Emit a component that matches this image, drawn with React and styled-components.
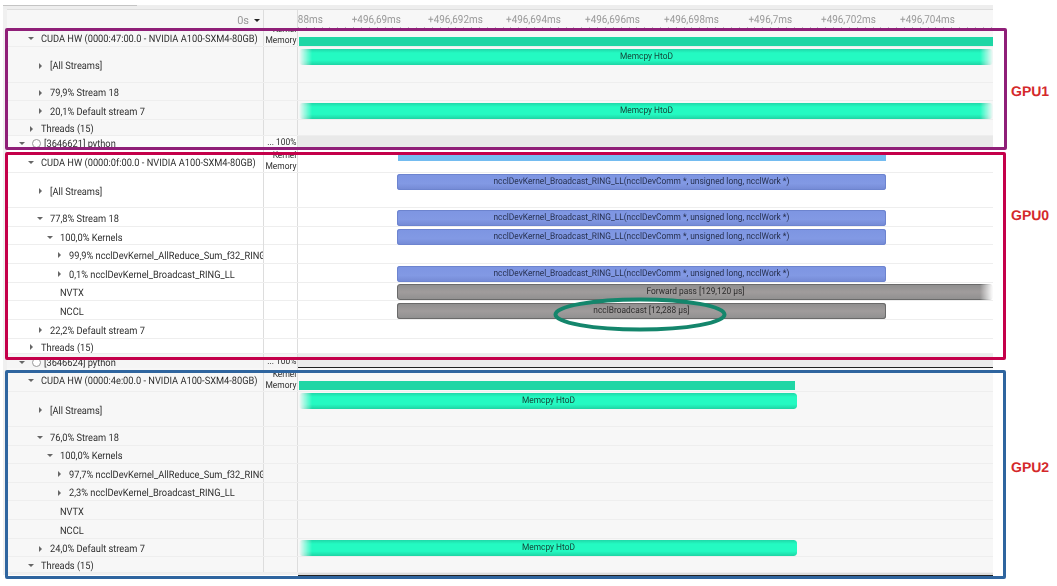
import React from 'react';
import styled, { createGlobalStyle, css } from 'styled-components';

const GlobalStyle = createGlobalStyle`
  html, body {
    margin: 0;
    padding: 0;
    background: #fff;
  }
  body {
    font-family: Roboto, "Liberation Sans", sans-serif;
    text-rendering: geometricPrecision;
  }
`;

// the capture is a bit narrower than it is tall, so the glyphs are too
const Squeezed = styled.span`
  display: inline-block;
  flex: none;
  transform: scaleX(0.9);
  transform-origin: ${p => p.$origin || 'center'};
`;

const Shell = styled.div`
  position: relative;
  width: 1057px;
  height: 586px;
  overflow: hidden;
  padding: 5px 0 0 3px;
  box-sizing: border-box;
`;

const Profiler = styled.div`
  width: 990px;
  height: 570px;
  background: #f0f0f0;
  padding-left: 4px;
  box-sizing: border-box;
  filter: blur(0.3px);
`;

const TopStrip = styled.div`
  height: 4px;
  margin-left: -4px;
  background: #eeeeee;
`;

const ScrollThumb = styled.div`
  width: 134px;
  height: 1px;
  background: #c4c4c4;
`;

const Columns = styled.div`
  display: grid;
  grid-template-columns: 257px 34px 1fr;
  height: ${p => p.$h}px;
  background: ${p => p.$bg || 'transparent'};
  border-bottom: ${p => (p.$last ? 'none' : '1px solid #eeeeee')};
  box-sizing: border-box;
`;

const HeaderRow = styled(Columns)`
  background: #f7f7f7;
  border-top: 1px solid #dddddd;
  border-bottom: none;
`;

const TableFoot = styled.div`
  height: 2px;
  margin-left: 291px;
  background: #dddddd;
  border-bottom: 1px solid #222222;
`;

const TotalCell = styled.div`
  border-right: 1px solid #dddddd;
  display: flex;
  align-items: center;
  justify-content: flex-end;
  gap: 5px;
  padding: 2px 3px 0 0;
  color: #999999;
  font-size: 11px;
`;

const SortArrow = styled.span`
  width: 0;
  height: 0;
  border-left: 3px solid transparent;
  border-right: 3px solid transparent;
  border-top: 3px solid #222222;
`;

const BlankHeader = styled.div`
  border-right: 1px solid #dddddd;
`;

const Ruler = styled.div`
  position: relative;
  display: flex;
  overflow: hidden;
  padding-top: 3px;
  margin-left: -39.5px;
  clip-path: inset(0 0 0 39.5px);
  color: #999999;
  font-size: 11px;
  &::after {
    content: '';
    position: absolute;
    left: 39.5px;
    right: 0;
    bottom: 0;
    height: 2px;
    background: repeating-linear-gradient(to right, #c0c0c0 0 1px, transparent 1px 7.87px);
  }
`;

const RulerLabel = styled.span`
  flex: 0 0 78.7px;
  display: flex;
  justify-content: center;
  white-space: nowrap;
  box-sizing: border-box;
  &:first-child {
    padding-right: 4px;
  }
`;

const NameCell = styled.div`
  display: flex;
  align-items: center;
  min-width: 0;
  overflow: hidden;
  white-space: nowrap;
  padding: 2px 0 0 ${p => p.$indent}px;
  border-right: 1px solid #dddddd;
  color: #2e2e2e;
  font-size: 10.3px;
`;

const CaretSlot = styled.span`
  flex: 0 0 8px;
  display: flex;
  justify-content: center;
  margin-right: 6px;
`;

const Caret = styled.span`
  width: 0;
  height: 0;
  ${p =>
    p.$open
      ? css`
          border-left: 3px solid transparent;
          border-right: 3px solid transparent;
          border-top: 3px solid #666666;
        `
      : css`
          border-top: 3px solid transparent;
          border-bottom: 3px solid transparent;
          border-left: 3px solid #666666;
        `}
`;

const ProcessDot = styled.span`
  flex: 0 0 9px;
  height: 9px;
  margin-right: 3px;
  border: 1px solid #999999;
  border-radius: 50%;
  background: #ffffff;
  box-sizing: border-box;
`;

const UsageCell = styled.div`
  display: flex;
  flex-direction: column;
  justify-content: ${p => (p.$stacked ? 'flex-end' : 'center')};
  align-items: flex-end;
  overflow: hidden;
  padding-right: 1px;
  border-right: 1px solid #dddddd;
  color: #2e2e2e;
  font-size: 9.4px;
  line-height: 11px;
  white-space: nowrap;
`;

const Track = styled.div`
  display: flex;
  align-items: flex-start;
  min-width: 0;
  background: ${p => p.$shade || 'transparent'};
  border-bottom: ${p => (p.$rule ? '1px solid #222222' : 'none')};
`;

const barSkins = {
  teal: css`
    background: linear-gradient(to bottom, #1fd8a8 0%, #24fac2 25%, #24fac2 70%, #1fd4a4 100%);
    color: #14463a;
    border-radius: 3px;
  `,
  solidTeal: css`
    background: #1fd6a5;
  `,
  sky: css`
    background: #74bcf0;
  `,
  kernel: css`
    background: linear-gradient(to bottom, #7d95e2 0%, #8299e4 60%, #7389d4 100%);
    box-shadow: inset 0 0 0 1px #6d84cf;
    color: #26304f;
    border-radius: 3px;
  `,
  marker: css`
    background: linear-gradient(to bottom, #8d8d8d 0%, #a09c9c 50%, #8f8f8f 100%);
    box-shadow: inset 0 0 0 1px #6a6a6a;
    color: #2c2c2c;
    border-radius: 3px;
  `,
};

const fadeMasks = {
  left: 'linear-gradient(to right, transparent 0, #000 13px)',
  right: 'linear-gradient(to left, transparent 0, #000 13px)',
  both: 'linear-gradient(to right, transparent 0, #000 13px, #000 calc(100% - 13px), transparent 100%)',
};

const Bar = styled.div`
  flex: 0 0 ${p => p.$width}px;
  height: ${p => p.$h}px;
  margin: ${p => p.$top}px 0 0 ${p => p.$left}px;
  display: flex;
  align-items: center;
  justify-content: center;
  padding-bottom: 1px;
  box-sizing: border-box;
  font-size: 9.3px;
  white-space: nowrap;
  overflow: hidden;
  ${p => barSkins[p.$kind]}
  ${p =>
    p.$fade &&
    css`
      mask-image: ${fadeMasks[p.$fade]};
    `}
`;

const Frame = styled.div`
  position: absolute;
  left: 5px;
  top: ${p => p.$top}px;
  width: ${p => p.$width}px;
  height: ${p => p.$h}px;
  border: 3px solid ${p => p.$color};
  border-radius: 2px;
  box-sizing: border-box;
`;

const GpuTag = styled.span`
  position: absolute;
  left: 1011px;
  top: ${p => p.$top}px;
  color: #d4282a;
  font-family: "Liberation Sans", Arial, sans-serif;
  font-size: 14px;
  font-weight: 700;
  line-height: 16px;
`;

const HighlightRing = styled.svg`
  position: absolute;
  left: 553px;
  top: 297px;
`;

const ticks = [
  '+496,688ms', '+496,69ms', '+496,692ms', '+496,694ms', '+496,696ms',
  '+496,698ms', '+496,7ms', '+496,702ms', '+496,704ms',
];

const GROUP_ONE = '#f7f7f7';
const GROUP_TWO = '#ffffff';
const GROUP_THREE = '#f7f7f7';
const KERNEL_TEXT = 'ncclDevKernel_Broadcast_RING_LL(ncclDevComm *, unsigned long, ncclWork *)';

const kernelBar = { kind: 'kernel', left: 99, width: 489, top: 2, h: 16, label: KERNEL_TEXT };

const rows = [
  { h: 18, bg: GROUP_ONE, depth: 1, open: true, name: 'CUDA HW (0000:47:00.0 - NVIDIA A100-SXM4-80GB)', stacked: true,
    bar: { kind: 'solidTeal', left: 1, width: 694, top: 8, h: 9 } },
  { h: 36, bg: GROUP_ONE, depth: 2, name: '[All Streams]',
    bar: { kind: 'teal', left: 1, width: 694, top: 2, h: 16, fade: 'both', label: 'Memcpy HtoD' } },
  { h: 18, bg: GROUP_ONE, depth: 2, name: '79,9% Stream 18' },
  { h: 19, bg: GROUP_ONE, depth: 2, name: '20,1% Default stream 7',
    bar: { kind: 'teal', left: 1, width: 694, top: 2, h: 16, fade: 'both', label: 'Memcpy HtoD' } },
  { h: 16, bg: GROUP_ONE, depth: 1, name: 'Threads (15)' },
  { h: 14, bg: '#fbfbfb', depth: 0, open: true, process: true, name: '[3646621] python', usage: '... 100%', shade: '#e9e9e9' },

  { h: 23, bg: GROUP_TWO, depth: 1, open: true, name: 'CUDA HW (0000:0f:00.0 - NVIDIA A100-SXM4-80GB)', stacked: true,
    bar: { kind: 'sky', left: 100, width: 488, top: 5, h: 6 } },
  { h: 35, bg: GROUP_TWO, depth: 2, name: '[All Streams]', bar: { ...kernelBar, top: 1 } },
  { h: 19, bg: GROUP_TWO, depth: 2, open: true, name: '77,8% Stream 18', bar: kernelBar },
  { h: 18, bg: GROUP_TWO, depth: 3, open: true, name: '100,0% Kernels', bar: kernelBar },
  { h: 19, bg: GROUP_TWO, depth: 4, name: '99,9% ncclDevKernel_AllReduce_Sum_f32_RING_LL' },
  { h: 19, bg: GROUP_TWO, depth: 4, name: '0,1% ncclDevKernel_Broadcast_RING_LL', bar: kernelBar },
  { h: 18, bg: GROUP_TWO, depth: 3, plain: true, name: 'NVTX',
    bar: { kind: 'marker', left: 99, width: 596, top: 1, h: 16, fade: 'right', label: 'Forward pass [129,120 µs]' } },
  { h: 19, bg: GROUP_TWO, depth: 3, plain: true, name: 'NCCL',
    bar: { kind: 'marker', left: 99, width: 489, top: 2, h: 16, label: 'ncclBroadcast [12,288 µs]' } },
  { h: 19, bg: GROUP_TWO, depth: 2, name: '22,2% Default stream 7' },
  { h: 15, bg: GROUP_TWO, depth: 1, name: 'Threads (15)' },
  { h: 14, bg: '#f5f5f5', depth: 0, open: true, process: true, name: '[3646624] python', usage: '... 100%', shade: '#ececec', rule: true, last: true },

  { h: 24, bg: GROUP_THREE, depth: 1, open: true, name: 'CUDA HW (0000:4e:00.0 - NVIDIA A100-SXM4-80GB)', stacked: true,
    bar: { kind: 'solidTeal', left: 1, width: 496, top: 13, h: 9 } },
  { h: 35, bg: GROUP_THREE, depth: 2, name: '[All Streams]',
    bar: { kind: 'teal', left: 1, width: 498, top: 1, h: 16, fade: 'left', label: 'Memcpy HtoD' } },
  { h: 19, bg: GROUP_THREE, depth: 2, open: true, name: '76,0% Stream 18' },
  { h: 18, bg: GROUP_THREE, depth: 3, open: true, name: '100,0% Kernels' },
  { h: 19, bg: GROUP_THREE, depth: 4, name: '97,7% ncclDevKernel_AllReduce_Sum_f32_RING_LL' },
  { h: 18, bg: GROUP_THREE, depth: 4, name: '2,3% ncclDevKernel_Broadcast_RING_LL' },
  { h: 19, bg: GROUP_THREE, depth: 3, plain: true, name: 'NVTX' },
  { h: 19, bg: GROUP_THREE, depth: 3, plain: true, name: 'NCCL' },
  { h: 18, bg: GROUP_THREE, depth: 2, name: '24,0% Default stream 7',
    bar: { kind: 'teal', left: 1, width: 498, top: 1, h: 16, fade: 'left', label: 'Memcpy HtoD' } },
  { h: 16, bg: GROUP_THREE, depth: 1, open: true, name: 'Threads (15)' },
];

function indentFor(row) {
  if (row.depth === 0) return 10.7;
  const textX = 41 + (row.depth - 1) * 9.35;
  return row.plain ? textX - 7 : textX - 21;
}

function TimelineRow({ row }) {
  const { bar } = row;
  return (
    <Columns $h={row.h} $bg={row.bg} $last={row.last}>
      <NameCell $indent={indentFor(row)}>
        {!row.plain && (
          <CaretSlot>
            <Caret $open={row.open} />
          </CaretSlot>
        )}
        {row.process && <ProcessDot />}
        <Squeezed $origin="left">{row.name}</Squeezed>
      </NameCell>
      <UsageCell $stacked={row.stacked}>
        {row.stacked ? (
          <>
            <Squeezed $origin="right">Kernel</Squeezed>
            <Squeezed $origin="right">Memory</Squeezed>
          </>
        ) : (
          <Squeezed $origin="right">{row.usage}</Squeezed>
        )}
      </UsageCell>
      <Track $shade={row.shade} $rule={row.rule}>
        {bar && (
          <Bar $kind={bar.kind} $left={bar.left} $width={bar.width} $top={bar.top} $h={bar.h} $fade={bar.fade}>
            {bar.label && <Squeezed>{bar.label}</Squeezed>}
          </Bar>
        )}
      </Track>
    </Columns>
  );
}

export default function App() {
  return (
    <Shell>
      <GlobalStyle />
      <Profiler>
        <TopStrip>
          <ScrollThumb />
        </TopStrip>
        <HeaderRow $h={20}>
          <TotalCell>
            0s <SortArrow />
          </TotalCell>
          <BlankHeader />
          <Ruler>
            {ticks.map(t => (
              <RulerLabel key={t}>
                <Squeezed>{t}</Squeezed>
              </RulerLabel>
            ))}
          </Ruler>
        </HeaderRow>
        {rows.map((row, i) => (
          <TimelineRow key={i} row={row} />
        ))}
        <TableFoot />
      </Profiler>

      <Frame $top={28} $width={1002} $h={122} $color="#8f1f78" />
      <Frame $top={152} $width={1001} $h={208} $color="#c4004a" />
      <Frame $top={370} $width={1001} $h={209} $color="#2f659f" />
      <GpuTag $top={83}>GPU1</GpuTag>
      <GpuTag $top={207}>GPU0</GpuTag>
      <GpuTag $top={459}>GPU2</GpuTag>
      <HighlightRing width="174" height="35" viewBox="0 0 174 35">
        <ellipse cx="87" cy="17.5" rx="84.5" ry="15" fill="none" stroke="#14866c" strokeWidth="4" />
      </HighlightRing>
    </Shell>
  );
}
